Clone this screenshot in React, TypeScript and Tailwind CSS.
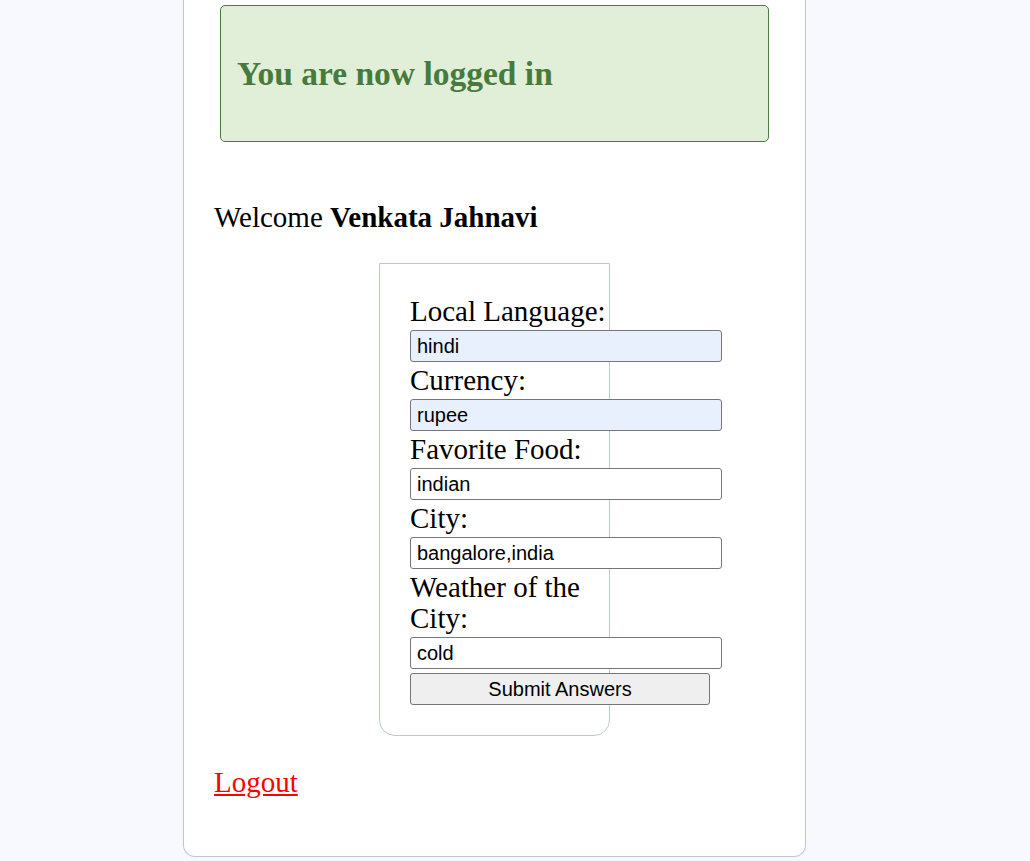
import React from 'react';

const serif = { fontFamily: '"Liberation Serif", "Times New Roman", serif' };
const sans = { fontFamily: '"Liberation Sans", Arial, sans-serif' };

const fields = [
  { label: 'Local Language:', value: 'hindi', filled: true },
  { label: 'Currency:', value: 'rupee', filled: true },
  { label: 'Favorite Food:', value: 'indian', filled: false },
  { label: 'City:', value: 'bangalore,india', filled: false },
  { label: 'Weather of the City:', value: 'cold', filled: false },
];

const App = () => {
  return (
    <div className="min-h-[861px] bg-[#f8f9fe]" style={serif}>
      <div className="ml-[183px] w-[623px] bg-white border border-t-0 border-[#b9c8e0] rounded-b-xl px-[30px] pt-[5px] pb-[57px] text-black">
        <div className="mx-[6px] h-[137px] flex items-center px-4 bg-[#e1efd8] border border-[#4c7a42] rounded-[5px]">
          <h1 className="text-[33.5px] font-bold text-[#477a3c] leading-none">You are now logged in</h1>
        </div>

        <p className="mt-[59px] text-[29px] leading-[33px]">
          Welcome <b>Venkata Jahnavi</b>
        </p>

        <div className="mx-auto mt-[29px] w-[231px] border border-[#b9c8e0] rounded-b-2xl pt-[29px] pb-[30px] pl-[30px]">
          {fields.map((f) => (
            <div key={f.label}>
              <label className="block text-[29px] leading-[31px] pt-[3px] pb-[3px]">{f.label}</label>
              <input
                readOnly
                value={f.value}
                className={`block w-[312px] h-[32px] px-[6px] border border-[#767676] rounded-[3px] text-[20px] text-black outline-none ${
                  f.filled ? 'bg-[#e8f0fe]' : 'bg-white'
                }`}
                style={sans}
              />
            </div>
          ))}
          <button
            className="block mt-[4px] w-[300px] h-[32px] bg-[#efefef] border border-[#767676] rounded-[3px] text-[20px] text-black"
            style={sans}
          >
            Submit Answers
          </button>
        </div>

        <a href="#" className="inline-block mt-[30px] text-[29px] leading-[33px] text-[#ff0000] underline">
          Logout
        </a>
      </div>
    </div>
  );
};

export default App;
